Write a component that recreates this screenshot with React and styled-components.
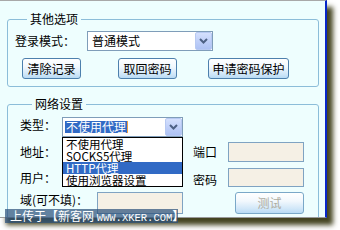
import React from "react";
import styled, { createGlobalStyle } from "styled-components";

const Global = createGlobalStyle`
  html, body { margin: 0; padding: 0; background: #ffffff; }
  body { font-family: "Noto Sans CJK SC", "DejaVu Sans", sans-serif; font-size: 12px; }
  * { box-sizing: border-box; }
`;

const Page = styled.div`
  position: relative;
  width: 340px;
  height: 230px;
  overflow: hidden;
`;

const Window = styled.div`
  width: 327px;
  height: 218px;
  background: #eefefe;
  border-top: 1px solid #a8a8a8;
  border-right: 2px solid #0626c8;
  border-bottom: 1px solid #9a9a9a;
  box-shadow: 6px 7px 5px rgba(52, 52, 14, 0.92);
  overflow: hidden;
`;

const Group = styled.fieldset`
  width: 312px;
  margin: ${(p) => p.$mt}px 0 0 7px;
  padding: ${(p) => p.$pt}px 7px 7px ${(p) => p.$pl}px;
  border: 1px solid #8cbdd9;
  border-radius: 3px;
  min-width: 0;
`;

const Legend = styled.legend`
  margin-left: 12px;
  padding: 0 3px;
  font-size: 12px;
  line-height: 14px;
  color: #000;
`;

const Row = styled.div`
  display: flex;
  align-items: center;
  height: ${(p) => p.$h}px;
  margin-top: ${(p) => p.$mt || 0}px;
`;

const Label = styled.span`
  width: ${(p) => p.$w}px;
  margin-left: ${(p) => p.$ml || 0}px;
  flex: none;
  font-size: 12px;
  line-height: 14px;
  color: #000;
  white-space: nowrap;
  position: relative;
  top: ${(p) => p.$dy || 0}px;
`;

const SelectBox = styled.div`
  position: relative;
  width: ${(p) => p.$w}px;
  height: 20px;
  flex: none;
  background: #fff;
  border: 1px solid #7f9db9;
  display: flex;
  align-items: center;
  padding-left: ${(p) => p.$pl}px;
  font-size: 12px;
  line-height: 12px;
`;

const SelectedText = styled.span`
  background: #316ac5;
  color: #fff;
  height: 12px;
  line-height: 12px;
  padding: 0 1px;
  border-right: 1px solid #f0a040;
`;

const ArrowBtn = styled.div`
  position: absolute;
  right: 0;
  top: 0;
  width: 17px;
  height: 18px;
  border: 1px solid #b7c9f2;
  border-radius: 2px;
  background: linear-gradient(180deg, #d4e0fd 0%, #bccdf8 60%, #aec2f4 100%);
  display: flex;
  align-items: center;
  justify-content: center;
`;

const DropList = styled.div`
  position: absolute;
  left: -1px;
  top: 19px;
  width: 121px;
  background: #fff;
  border: 1px solid #000;
  z-index: 5;
`;

const DropItem = styled.div`
  height: 12px;
  line-height: 12px;
  padding-left: 3px;
  font-size: 11.5px;
  white-space: nowrap;
  background: ${(p) => (p.$active ? "#316ac5" : "#fff")};
  color: ${(p) => (p.$active ? "#fff" : "#000")};
`;

const Button = styled.button`
  width: ${(p) => p.$w}px;
  height: ${(p) => p.$h || 21}px;
  margin-left: ${(p) => p.$ml || 0}px;
  flex: none;
  padding: 0;
  border: 1px solid ${(p) => (p.disabled ? "#7aa8c8" : "#4d80ad")};
  border-radius: 3px;
  background: linear-gradient(180deg, #ffffff 0%, #f2f8fd 40%, #cfe6f8 80%, #b9dbf4 100%);
  font-family: "Noto Sans CJK SC", "DejaVu Sans", sans-serif;
  font-size: 12px;
  line-height: 14px;
  color: ${(p) => (p.disabled ? "#aeaca0" : "#000")};
`;

const Input = styled.div`
  width: ${(p) => p.$w}px;
  height: ${(p) => p.$h}px;
  margin-left: ${(p) => p.$ml || 0}px;
  flex: none;
  background: #f5f0e5;
  border: 1px solid #7fa3c2;
  align-self: flex-start;
`;

const Watermark = styled.div`
  position: absolute;
  left: 5px;
  top: 209px;
  width: 173px;
  height: 14px;
  background: rgba(44, 82, 124, 0.72);
  color: #fff;
  font-size: 12px;
  line-height: 14px;
  padding-left: 5px;
  white-space: nowrap;
`;

const Mono = styled.span`
  font-family: "Liberation Mono", "DejaVu Sans Mono", monospace;
  font-size: 10.5px;
`;

const Chevron = () => (
  <svg width="9" height="6" viewBox="0 0 9 6">
    <path d="M1 1 L4.5 4.5 L8 1" fill="none" stroke="#4d6185" strokeWidth="2" />
  </svg>
);

export default function App() {
  return (
    <Page>
      <Global />
      <Window>
        <Group $mt={11} $pt={5} $pl={7}>
          <Legend>其他选项</Legend>
          <Row $h={20}>
            <Label $w={72}>登录模式：</Label>
            <SelectBox $w={126} $pl={4}>
              普通模式
              <ArrowBtn>
                <Chevron />
              </ArrowBtn>
            </SelectBox>
          </Row>
          <Row $h={21} $mt={7}>
            <Button $w={59} $ml={7}>清除记录</Button>
            <Button $w={59} $ml={37}>取回密码</Button>
            <Button $w={81} $ml={31}>申请密码保护</Button>
          </Row>
        </Group>
        <Group $mt={10} $pt={6} $pl={12}>
          <Legend>网络设置</Legend>
          <Row $h={20}>
            <Label $w={42} $dy={-2}>类型：</Label>
            <SelectBox $w={121} $pl={2}>
              <SelectedText>不使用代理</SelectedText>
              <ArrowBtn>
                <Chevron />
              </ArrowBtn>
              <DropList>
                <DropItem>不使用代理</DropItem>
                <DropItem>SOCKS5代理</DropItem>
                <DropItem $active>HTTP代理</DropItem>
                <DropItem>使用浏览器设置</DropItem>
              </DropList>
            </SelectBox>
          </Row>
          <Row $h={20} $mt={5}>
            <Label $w={42}>地址：</Label>
            <Input $w={121} $h={20} />
            <Label $w={35} $ml={10}>端口</Label>
            <Input $w={76} $h={20} />
          </Row>
          <Row $h={19} $mt={6}>
            <Label $w={42}>用户：</Label>
            <Input $w={121} $h={19} />
            <Label $w={35} $ml={10} $dy={2}>密码</Label>
            <Input $w={76} $h={19} />
          </Row>
          <Row $h={22} $mt={5}>
            <Label $w={77} $dy={-3}>域(可不填)：</Label>
            <Input $w={86} $h={22} />
            <Button $w={69} $h={22} $ml={52} disabled>测试</Button>
          </Row>
        </Group>
      </Window>
      <Watermark>
        上传于【新客网 <Mono>WWW.XKER.COM</Mono>】
      </Watermark>
    </Page>
  );
}
